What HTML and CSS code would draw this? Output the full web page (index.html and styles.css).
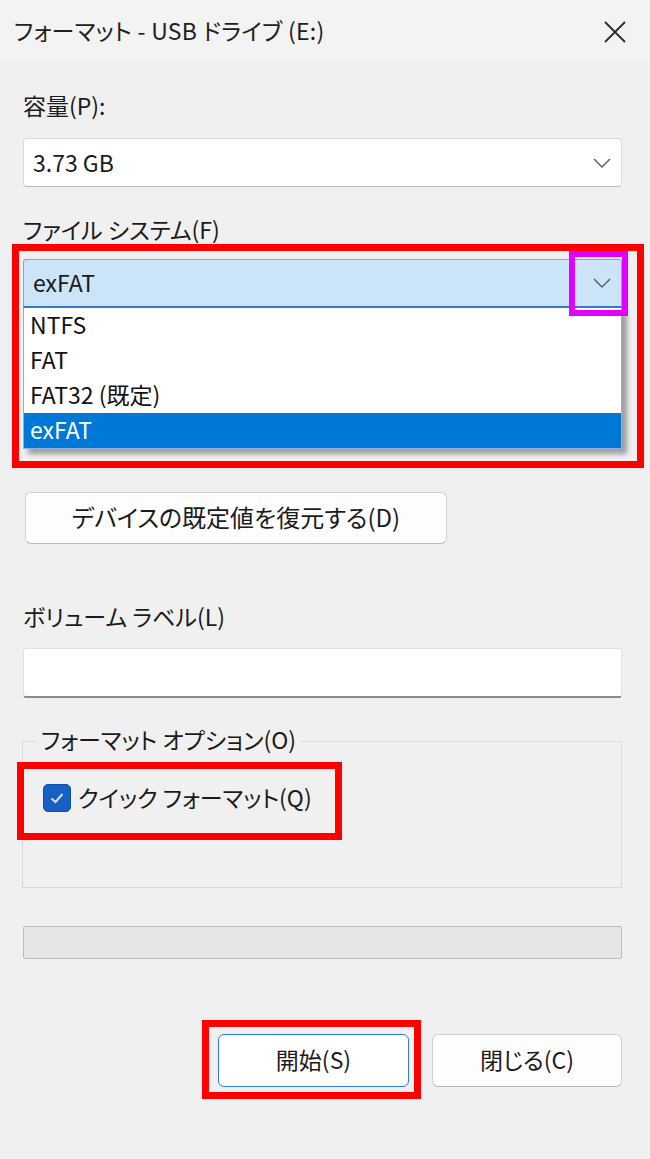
FILE: index.html
```html
<!DOCTYPE html>
<html lang="ja">
<head>
<meta charset="utf-8">
<title>フォーマット - USB ドライブ (E:)</title>
<link rel="stylesheet" href="styles.css">
</head>
<body>
<div class="dialog">
  <div class="titlebar">
    <span class="title">フォーマット - USB ドライブ (E:)</span>
    <span class="close">
      <svg width="24" height="24" viewBox="0 0 24 24"><path d="M2 2 L22 22 M22 2 L2 22" stroke="#2b2b2b" stroke-width="1.8" fill="none"/></svg>
    </span>
  </div>
  <div class="content">
    <div class="label lbl-cap">容量(P):</div>
    <div class="combo combo-cap">
      <span class="combo-text">3.73 GB</span>
      <svg class="chev" width="18" height="10" viewBox="0 0 18 10"><polyline points="1,1 9,9 17,1" fill="none" stroke="#5a5a5a" stroke-width="1.4"/></svg>
    </div>
    <div class="label lbl-fs">ファイル システム(F)</div>
    <div class="combo-wrap">
      <div class="combo combo-fs">
        <span class="combo-text">exFAT</span>
        <svg class="chev" width="18" height="10" viewBox="0 0 18 10"><polyline points="1,1 9,9 17,1" fill="none" stroke="#5a5a5a" stroke-width="1.4"/></svg>
      </div>
      <ul class="list">
        <li class="item">NTFS</li>
        <li class="item">FAT</li>
        <li class="item">FAT32 (既定)</li>
        <li class="item selected">exFAT</li>
      </ul>
    </div>
    <button class="btn btn-restore">デバイスの既定値を復元する(D)</button>
    <div class="label lbl-vol">ボリューム ラベル(L)</div>
    <div class="input"></div>
    <div class="group">
      <span class="legend">フォーマット オプション(O)</span>
      <div class="check-row">
        <span class="checkbox">
          <svg width="18" height="18" viewBox="0 0 18 18"><polyline points="3.5,9.5 7.5,13 14.5,5" fill="none" stroke="#d6e2f3" stroke-width="2"/></svg>
        </span>
        <span class="check-label">クイック フォーマット(Q)</span>
      </div>
    </div>
    <div class="progress"></div>
    <div class="buttons">
      <button class="btn btn-start">開始(S)</button>
      <button class="btn btn-close">閉じる(C)</button>
    </div>
  </div>
</div>
<div class="mark mark-fs"></div>
<div class="mark-m mark-arrow"></div>
<div class="mark mark-check"></div>
<div class="mark mark-start"></div>
</body>
</html>
```

FILE: styles.css
```css
html, body {
  margin: 0;
  padding: 0;
}
body {
  position: relative;
  width: 650px;
  height: 1159px;
  background: #f0f0f0;
  font-family: "Noto Sans CJK JP", "Noto Sans", sans-serif;
  font-feature-settings: "palt";
  color: #1b1b1b;
  overflow: hidden;
}
.dialog {
  display: flex;
  flex-direction: column;
}
.titlebar {
  height: 63px;
  background: #f3f3f3;
  display: flex;
  align-items: center;
  justify-content: space-between;
  padding: 0 23px 0 14px;
}
.title {
  font-size: 23px;
  line-height: 30px;
  color: #202020;
  margin-top: -4px;
  letter-spacing: 0.3px;
}
.close {
  display: flex;
  width: 24px;
  height: 24px;
}
.content {
  display: flex;
  flex-direction: column;
  padding: 0 28px 0 23px;
}
.label {
  font-size: 23px;
  line-height: 30px;
  height: 30px;
}
.lbl-cap { margin-top: 27px; }
.lbl-fs { margin-top: 27px; }
.lbl-vol { margin-top: 57px; }
.combo {
  box-sizing: border-box;
  height: 49px;
  display: flex;
  align-items: center;
  justify-content: space-between;
  padding: 0 10px 0 9px;
  border-radius: 4px;
}
.combo-text {
  font-size: 23px;
  line-height: 30px;
  margin-top: -2px;
}
.combo-cap {
  margin-top: 18px;
  background: #ffffff;
  border: 1px solid #dadada;
  border-bottom-color: #b8b8b8;
}
.combo-wrap {
  position: relative;
  margin-top: 15px;
}
.combo-fs {
  background: #cce4f7;
  border: 1px solid #7ea6da;
  border-bottom: 2px solid #3478d2;
  border-radius: 3px 3px 0 0;
}
.list {
  position: absolute;
  left: 0;
  right: 0;
  top: 49px;
  margin: 0;
  padding: 0;
  list-style: none;
  background: #ffffff;
  border: 1px solid #8fb1df;
  border-top: none;
  box-shadow: 5px 5px 5px rgba(0, 0, 0, 0.35);
}
.item {
  height: 35px;
  line-height: 33px;
  padding-left: 6px;
  font-size: 23px;
  color: #111;
}
.item.selected {
  background: #0078d7;
  color: #ffffff;
}
.btn {
  box-sizing: border-box;
  font-family: "Noto Sans CJK JP", "Noto Sans", sans-serif;
  font-feature-settings: "palt";
  font-size: 23px;
  color: #1b1b1b;
  background: #fdfdfd;
  border: 1px solid #d0d0d0;
  border-bottom-color: #b9b9b9;
  border-radius: 6px;
  padding: 0 0 3px 0;
  line-height: 30px;
}
.btn-restore {
  margin-top: 184px;
  margin-left: 2px;
  width: 422px;
  height: 52px;
  font-size: 24px;
}
.input {
  margin-top: 17px;
  height: 50px;
  box-sizing: border-box;
  background: #ffffff;
  border: 1px solid #e2e2e2;
  border-bottom: 2px solid #8a8a8a;
  border-radius: 3px;
}
.group {
  margin-top: 43px;
  margin-left: -1px;
  height: 147px;
  box-sizing: border-box;
  border: 1px solid #dadada;
  display: flex;
  flex-direction: column;
  align-items: flex-start;
}
.legend {
  margin-top: -18px;
  margin-left: 13px;
  padding: 0 5px;
  background: #f0f0f0;
  font-size: 23px;
  line-height: 30px;
}
.check-row {
  display: flex;
  align-items: center;
  margin-top: 30px;
  margin-left: 20px;
  gap: 7px;
}
.checkbox {
  box-sizing: border-box;
  width: 28px;
  height: 28px;
  border-radius: 5px;
  background: #1560c2;
  border: 1px solid #0d4fa8;
  display: flex;
  align-items: center;
  justify-content: center;
}
.check-label {
  font-size: 23px;
  line-height: 30px;
  margin-top: -3px;
}
.progress {
  margin-top: 38px;
  height: 33px;
  box-sizing: border-box;
  background: #e6e6e6;
  border: 1px solid #bcbcbc;
  border-radius: 2px;
}
.buttons {
  margin-top: 75px;
  display: flex;
  justify-content: flex-end;
  gap: 23px;
}
.btn-start {
  width: 191px;
  height: 53px;
  border: 1.5px solid #2f78d6;
  background: #ffffff;
}
.btn-close {
  width: 190px;
  height: 53px;
}
.mark {
  position: absolute;
  box-sizing: border-box;
  border: 7px solid #ff0000;
}
.mark-m {
  position: absolute;
  box-sizing: border-box;
  border: 6px solid #e100ff;
}
.mark-fs { left: 12px; top: 244px; width: 632px; height: 224px; }
.mark-arrow { left: 569px; top: 251px; width: 59px; height: 65px; }
.mark-check { left: 17px; top: 762px; width: 325px; height: 78px; }
.mark-start { left: 202px; top: 1020px; width: 219px; height: 79px; }
```
